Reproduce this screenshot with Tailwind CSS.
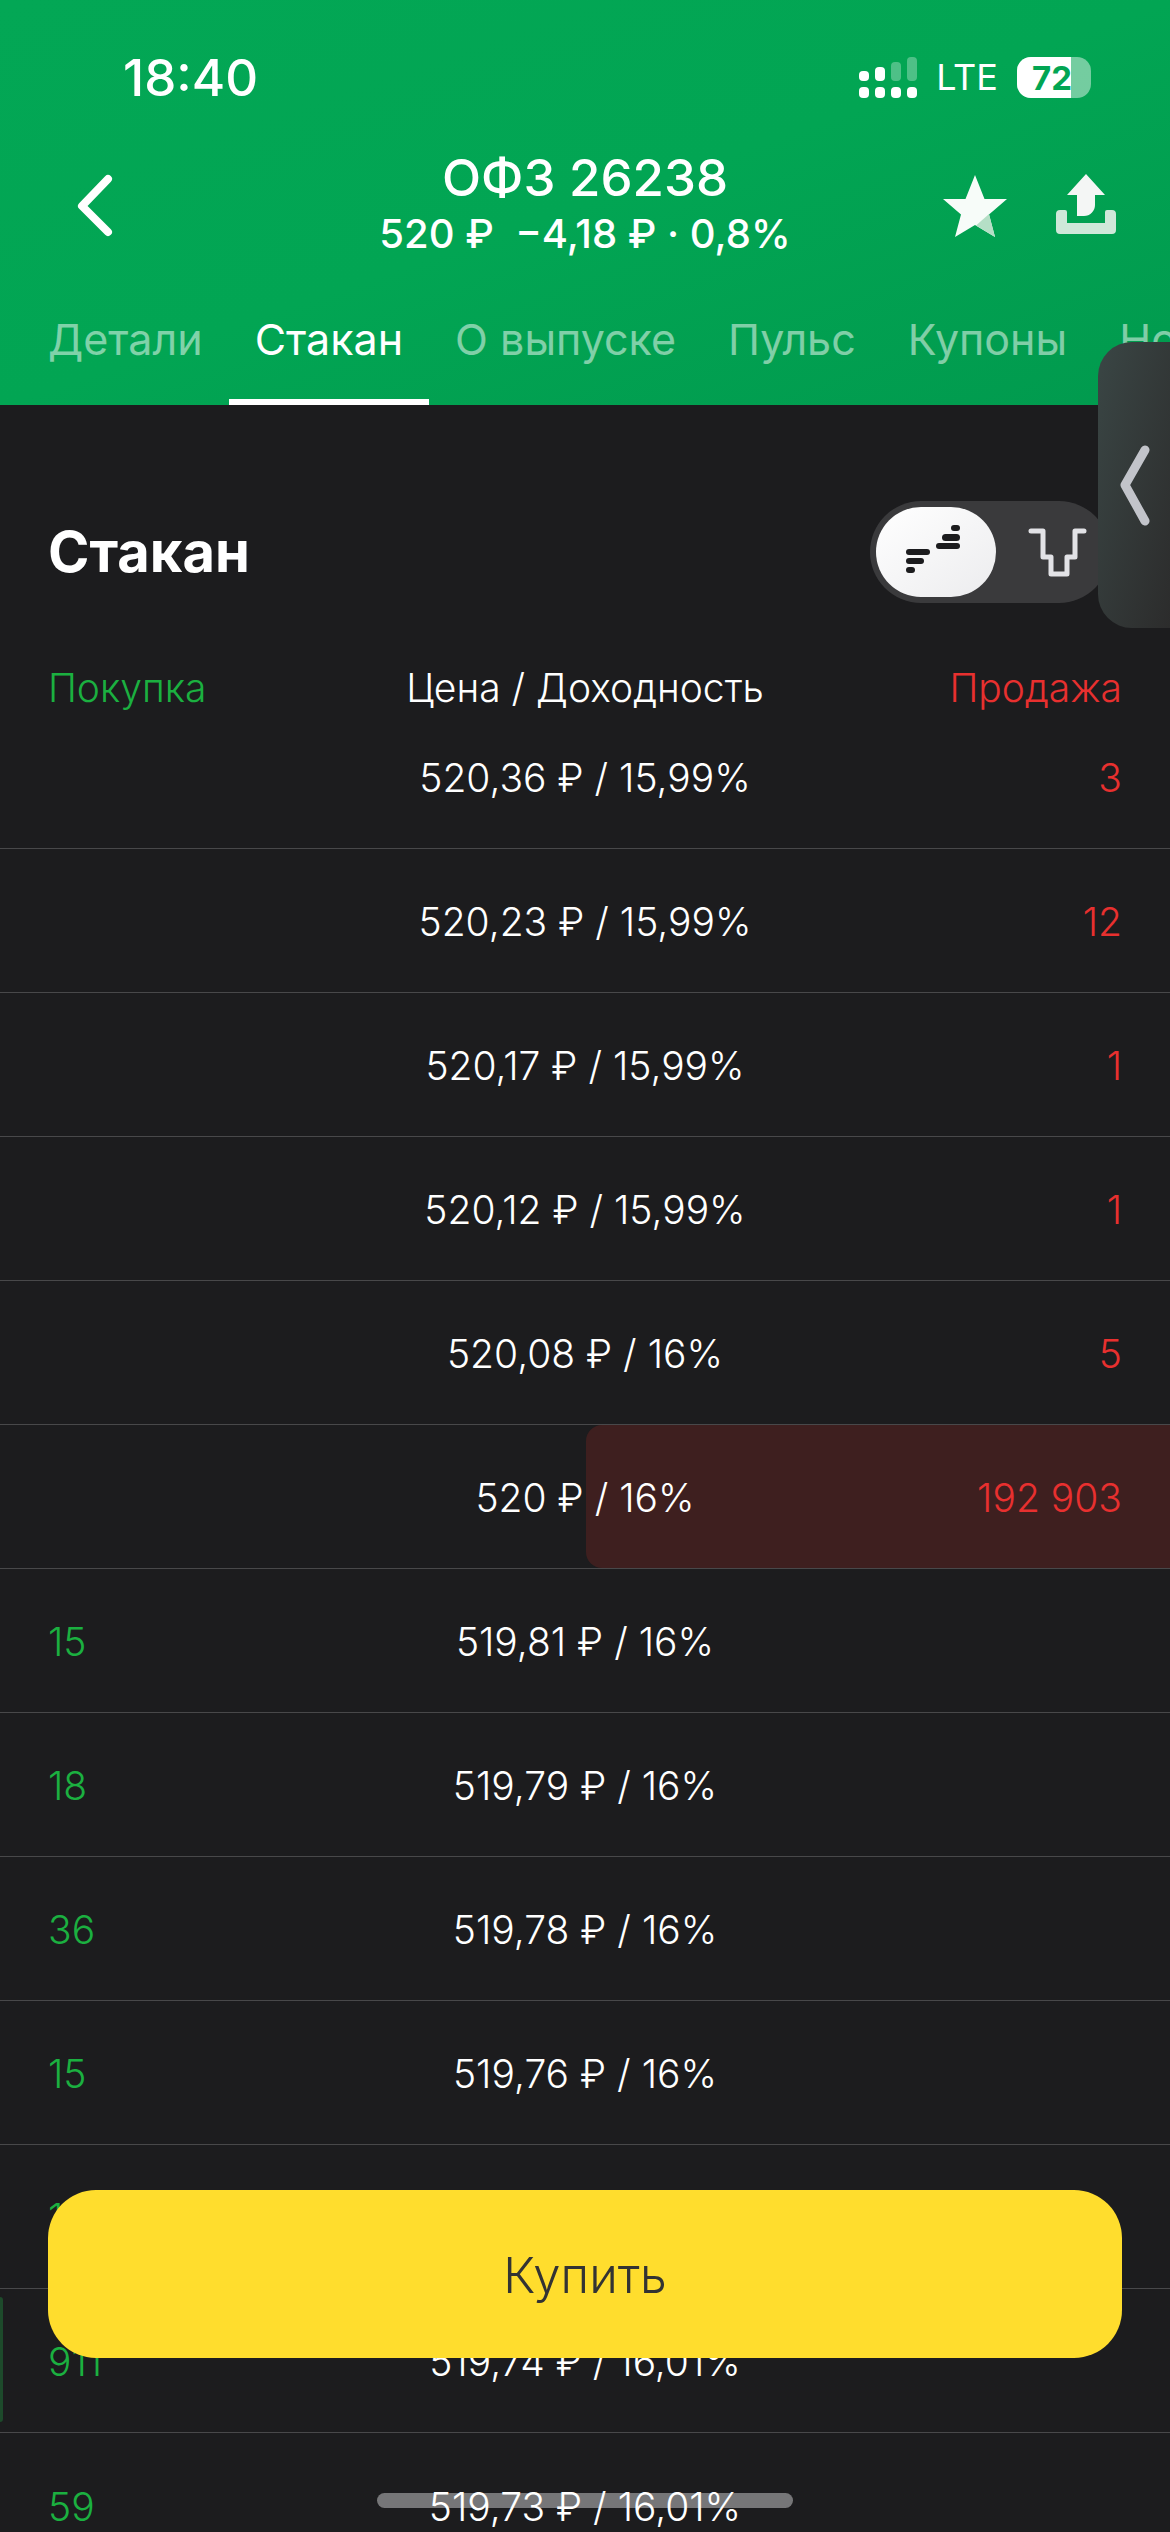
<!DOCTYPE html>
<html lang="ru">
<head>
<meta charset="UTF-8">
<meta name="viewport" content="width=device-width, initial-scale=1.0">
<title>Стакан</title>
<script src="https://cdn.jsdelivr.net/npm/@tailwindcss/browser@4"></script>
</head>
<body class="bg-[#1c1c1e]">
<div class="relative w-[1170px] h-[2532px] overflow-hidden bg-[#1c1c1e] text-white [font-family:Inter,sans-serif]">

  <!-- Green header -->
  <header class="h-[405px] bg-linear-to-br from-[#03a755] via-[#02a553] to-[#019a4e] flex flex-col">
    <!-- Status bar -->
    <div class="h-[150px] flex justify-between pl-[123px] pr-[79px] pt-[52px]">
      <span class="text-[51px] leading-[52px] font-medium">18:40</span>
      <div class="flex items-start gap-[19px] pt-[5px]">
        <svg width="60" height="44" viewBox="0 0 60 44" fill="#fff">
          <rect x="0" y="14" width="10" height="10" rx="4"/>
          <rect x="16" y="10" width="10" height="14" rx="4"/>
          <rect x="32" y="5" width="10" height="19" rx="4" opacity=".3"/>
          <rect x="48" y="0" width="10" height="24" rx="4" opacity=".3"/>
          <rect x="0" y="30" width="10" height="11" rx="4"/>
          <rect x="16" y="30" width="10" height="11" rx="4"/>
          <rect x="32" y="30" width="10" height="11" rx="4"/>
          <rect x="48" y="30" width="10" height="11" rx="4"/>
        </svg>
        <span class="text-[36px] leading-[40px] font-normal -ml-[2px]">LTE</span>
        <div class="relative w-[74px] h-[41px] rounded-[14px] overflow-hidden bg-white/45">
          <div class="absolute left-0 top-0 bottom-0 w-[54px] bg-white"></div>
          <span class="absolute left-[15px] top-[3px] text-[33px] leading-[36px] font-bold text-[#02a553]">72</span>
        </div>
      </div>
    </div>

    <!-- Title row -->
    <div class="relative h-[115px] flex flex-col items-center">
      <span class="text-[51px] leading-[56px] font-medium">ОФЗ 26238</span>
      <span class="text-[40px] leading-[44px] font-medium mt-[6px] whitespace-pre">520 ₽  −4,18 ₽ · 0,8%</span>
      <svg class="absolute left-0 top-0" width="1170" height="115" viewBox="0 150 1170 115" fill="none">
        <path d="M108 179 82 206l26 26" stroke="#fff" stroke-width="8" stroke-linecap="round" stroke-linejoin="round"/>
        <path d="M975 175l9.500 24H1007l-18 15.500 6 22.500-20-12-20 12 6-22.500-18-15.500h22.500z" fill="#fff" opacity=".97"/>
        <path d="M989 214l6 23-19-11.500z" fill="#b5dfc6"/>
        <path d="M1086 174l19 21h-10v10a11 11 0 0 1-11 11h-7v-21h-10z" fill="#f4f6f5"/>
        <path d="M1056 214a4 4 0 0 1 4-4h5a2 2 0 0 1 2 2v11h38v-11a2 2 0 0 1 2-2h5a4 4 0 0 1 4 4v16a4 4 0 0 1-4 4h-52a4 4 0 0 1-4-4z" fill="#cfe8d9"/>
      </svg>
    </div>

    <!-- Tabs -->
    <nav class="flex-1 flex pl-[22px] text-[43px] leading-[48px] whitespace-nowrap overflow-hidden">
      <a class="px-[26px] pt-[50px] text-white/50">Детали</a>
      <a class="relative px-[26px] pt-[50px] text-white">Стакан<span class="absolute left-0 right-0 bottom-0 h-[6px] bg-white"></span></a>
      <a class="px-[26px] pt-[50px] text-white/50">О выпуске</a>
      <a class="px-[26px] pt-[50px] text-white/50">Пульс</a>
      <a class="px-[26px] pt-[50px] text-white/50">Купоны</a>
      <a class="px-[26px] pt-[50px] text-white/50">Но</a>
    </nav>
  </header>

  <!-- Title + view toggle -->
  <section class="h-[255px] px-[48px] flex justify-between items-start pt-[96px]">
    <h1 class="text-[56px] leading-[66px] font-bold mt-[18px]">Стакан</h1>
    <div class="relative w-[240px] h-[102px] rounded-full bg-[#3a3a3c] mr-[12px] p-[6px]">
      <div class="w-[120px] h-[90px] rounded-full bg-linear-to-br from-white to-[#ececee]"></div>
      <svg class="absolute left-0 top-0" width="240" height="102" viewBox="870 501 240 102">
        <g fill="#1c1c1e">
          <rect x="951" y="525" width="9" height="6" rx="3"/>
          <rect x="942" y="534" width="18" height="7" rx="3.500"/>
          <rect x="936" y="543" width="24" height="6" rx="3"/>
          <rect x="906" y="549" width="24" height="6" rx="3"/>
          <rect x="906" y="558" width="18" height="6" rx="3"/>
          <rect x="906" y="567" width="9" height="6" rx="3"/>
        </g>
        <path d="M1031 531h12v26h8v17h16v-17h8v-26h9" fill="none" stroke="#e2e2e6" stroke-width="5" stroke-linecap="round" stroke-linejoin="round"/>
      </svg>
    </div>
  </section>

  <!-- Table header -->
  <div class="h-[45px] grid grid-cols-[1fr_auto_1fr] items-center px-[48px] text-[39px] leading-[44px] font-[350]">
    <span class="text-[#1bb040] translate-y-[5px]">Покупка</span>
    <span class="translate-y-[5px]">Цена / Доходность</span>
    <span class="text-right text-[#e8302f] translate-y-[5px]">Продажа</span>
  </div>

  <!-- Order book -->
  <div class="text-[39px] leading-[44px] font-[350]">
    <div class="h-[144px] pt-[3px] border-b border-[#48484a] grid grid-cols-[1fr_auto_1fr] items-center px-[48px]">
      <span></span><span>520,36 ₽ / 15,99%</span><span class="text-right text-[#e8302f]">3</span>
    </div>
    <div class="h-[144px] pt-[3px] border-b border-[#48484a] grid grid-cols-[1fr_auto_1fr] items-center px-[48px]">
      <span></span><span>520,23 ₽ / 15,99%</span><span class="text-right text-[#e8302f]">12</span>
    </div>
    <div class="h-[144px] pt-[3px] border-b border-[#48484a] grid grid-cols-[1fr_auto_1fr] items-center px-[48px]">
      <span></span><span>520,17 ₽ / 15,99%</span><span class="text-right text-[#e8302f]">1</span>
    </div>
    <div class="h-[144px] pt-[3px] border-b border-[#48484a] grid grid-cols-[1fr_auto_1fr] items-center px-[48px]">
      <span></span><span>520,12 ₽ / 15,99%</span><span class="text-right text-[#e8302f]">1</span>
    </div>
    <div class="h-[144px] pt-[3px] border-b border-[#48484a] grid grid-cols-[1fr_auto_1fr] items-center px-[48px]">
      <span></span><span>520,08 ₽ / 16%</span><span class="text-right text-[#e8302f]">5</span>
    </div>
    <div class="relative h-[144px] pt-[3px] border-b border-[#48484a] grid grid-cols-[1fr_auto_1fr] items-center px-[48px]">
      <div class="absolute left-[586px] right-0 top-0 bottom-0 bg-[#3e1f1f] rounded-l-[16px]"></div>
      <span></span><span class="relative">520 ₽ / 16%</span><span class="relative text-right text-[#e8302f]">192 903</span>
    </div>
    <div class="h-[144px] pt-[3px] border-b border-[#48484a] grid grid-cols-[1fr_auto_1fr] items-center px-[48px]">
      <span class="text-[#1bb040]">15</span><span>519,81 ₽ / 16%</span><span></span>
    </div>
    <div class="h-[144px] pt-[3px] border-b border-[#48484a] grid grid-cols-[1fr_auto_1fr] items-center px-[48px]">
      <span class="text-[#1bb040]">18</span><span>519,79 ₽ / 16%</span><span></span>
    </div>
    <div class="h-[144px] pt-[3px] border-b border-[#48484a] grid grid-cols-[1fr_auto_1fr] items-center px-[48px]">
      <span class="text-[#1bb040]">36</span><span>519,78 ₽ / 16%</span><span></span>
    </div>
    <div class="h-[144px] pt-[3px] border-b border-[#48484a] grid grid-cols-[1fr_auto_1fr] items-center px-[48px]">
      <span class="text-[#1bb040]">15</span><span>519,76 ₽ / 16%</span><span></span>
    </div>
    <div class="h-[144px] pt-[3px] border-b border-[#48484a] grid grid-cols-[1fr_auto_1fr] items-center px-[48px]">
      <span class="text-[#1bb040]">15</span><span>519,75 ₽ / 16%</span><span></span>
    </div>
    <div class="relative h-[144px] pt-[3px] border-b border-[#48484a] grid grid-cols-[1fr_auto_1fr] items-center px-[48px]">
      <div class="absolute left-0 w-[3px] top-[8px] bottom-[10px] bg-[#1d4a2b] rounded-r-[3px]"></div>
      <span class="text-[#1bb040]">911</span><span>519,74 ₽ / 16,01%</span><span></span>
    </div>
    <div class="h-[144px] pt-[3px] grid grid-cols-[1fr_auto_1fr] items-center px-[48px]">
      <span class="text-[#1bb040]">59</span><span>519,73 ₽ / 16,01%</span><span></span>
    </div>
  </div>

  <!-- Floating overlays -->
  <div class="absolute left-[1098px] right-0 top-[342px] h-[286px] rounded-l-[34px] bg-linear-to-br from-[#3a4645] to-[#2c2c2c]">
    <svg class="absolute left-0 top-0" width="72" height="286" viewBox="1098 342 72 286">
      <path d="M1145 450 1125 485l20 36" fill="none" stroke="#c2c4ca" stroke-width="9" stroke-linecap="round" stroke-linejoin="round"/>
    </svg>
  </div>

  <button class="absolute left-[48px] top-[2190px] w-[1074px] h-[168px] pt-[3px] rounded-[48px] bg-[#ffdd2d] text-[#333] text-[49px] font-[350]">Купить</button>

  <div class="absolute left-[377px] top-[2493px] w-[416px] h-[15px] rounded-full bg-white/40"></div>
</div>
</body>
</html>
